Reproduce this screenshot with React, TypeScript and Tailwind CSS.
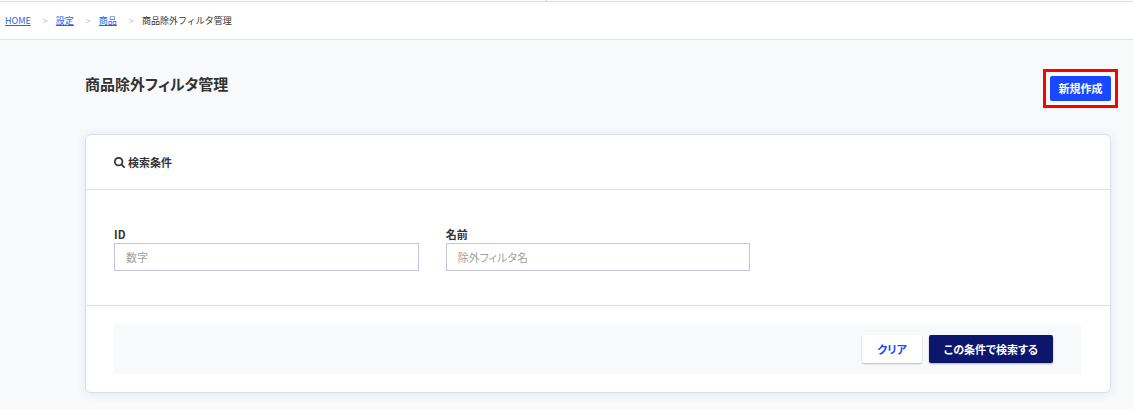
import React from 'react';

interface Crumb {
  label: string;
  href?: string;
}

const crumbs: Crumb[] = [
  { label: 'HOME', href: '#home' },
  { label: '設定', href: '#settings' },
  { label: '商品', href: '#products' },
  { label: '商品除外フィルタ管理' },
];

const SearchIcon: React.FC<{ className?: string }> = ({ className }) => (
  <svg viewBox="0 0 1664 1664" fill="currentColor" aria-hidden="true" className={className}>
    <path d="M1152 704q0-185-131.5-316.5t-316.5-131.5-316.5 131.5-131.5 316.5 131.5 316.5 316.5 131.5 316.5-131.5 131.5-316.5zm512 832q0 52-38 90t-90 38q-54 0-90-38l-343-342q-179 124-399 124-143 0-273.5-55.5t-225-150-150-225-55.5-273.5 55.5-273.5 150-225 225-150 273.5-55.5 273.5 55.5 225 150 150 225 55.5 273.5q0 220-124 399l343 343q37 37 37 90z" />
  </svg>
);

const Breadcrumbs: React.FC<{ items: Crumb[] }> = ({ items }) => (
  <nav className="h-[38px] border-b border-[#dfe2e6] bg-white px-[5px]">
    <ol className="flex h-full items-center text-[9px] [font-feature-settings:normal]">
      {items.map((item, i) => (
        <li key={item.label} className="flex items-center">
          {i > 0 && <span className="mr-2 ml-3 text-[#b9bccb]">&gt;</span>}
          {item.href ? (
            <a href={item.href} className="text-[#1a66f0] underline">{item.label}</a>
          ) : (
            <span>{item.label}</span>
          )}
        </li>
      ))}
    </ol>
  </nav>
);

interface TextFieldProps {
  id: string;
  label: string;
  placeholder: string;
}

const TextField: React.FC<TextFieldProps> = ({ id, label, placeholder }) => (
  <div>
    <label htmlFor={id} className="block pb-px text-[11px] leading-4 font-bold">{label}</label>
    <input
      id={id}
      type="text"
      placeholder={placeholder}
      className="block h-7 w-full border border-[#c3c3d9] bg-white px-[11px] text-[11px] placeholder:text-[#a0a0a0]"
    />
  </div>
);

function App() {
  return (
    <div className="min-h-screen bg-[#f7f9fb] font-['Noto_Sans_CJK_JP',sans-serif] text-[#333] [font-feature-settings:'palt']">
      <div className="h-[2px] border-b border-[#dcdcdc] bg-white">
        <div className="ml-[48.2%] h-px w-px bg-[#cccccc]" />
      </div>
      <Breadcrumbs items={crumbs} />

      <main className="pt-9 pr-[22px] pb-4 pl-[85px]">
        <div className="mb-[33px] flex items-start justify-between">
          <h1 className="text-[15px] leading-4 font-bold">商品除外フィルタ管理</h1>
          <div className="outline-3 outline-offset-4 outline-[#ff0000]">
            <button type="button" className="block h-[25px] min-w-[61px] rounded-xs bg-[#1a48ff] px-2 text-[11px] font-bold text-white">
              新規作成
            </button>
          </div>
        </div>

        <form className="rounded-md border border-[#dcdfe9] bg-white shadow-[0_1px_8px_rgba(80,160,180,0.15)]">
          <h2 className="flex h-[55px] items-center gap-[3px] border-b border-[#dfe1e6] px-7 text-[11px] font-bold">
            <SearchIcon className="size-[11px]" />
            検索条件
          </h2>

          <div className="grid grid-cols-3 gap-[27px] border-b border-[#dcdde1] px-7 pt-9 pb-[34px]">
            <TextField id="filter-id" label="ID" placeholder="数字" />
            <TextField id="filter-name" label="名前" placeholder="除外フィルタ名" />
          </div>

          <div className="py-[18px] pr-[29px] pl-7">
            <div className="flex h-[50px] items-center justify-end gap-[7px] bg-[#f7f9fb] px-7 text-[11px] font-bold">
              <button type="reset" className="h-7 rounded-xs bg-white px-[15px] text-[#1a48ff] shadow-[0_1px_2px_rgba(0,0,0,0.25)]">
                クリア
              </button>
              <button type="submit" className="h-7 rounded-xs bg-[#0c166d] px-[15px] text-white shadow-[0_1px_2px_rgba(0,0,0,0.3)]">
                この条件で検索する
              </button>
            </div>
          </div>
        </form>
      </main>
    </div>
  );
}

export default App;
